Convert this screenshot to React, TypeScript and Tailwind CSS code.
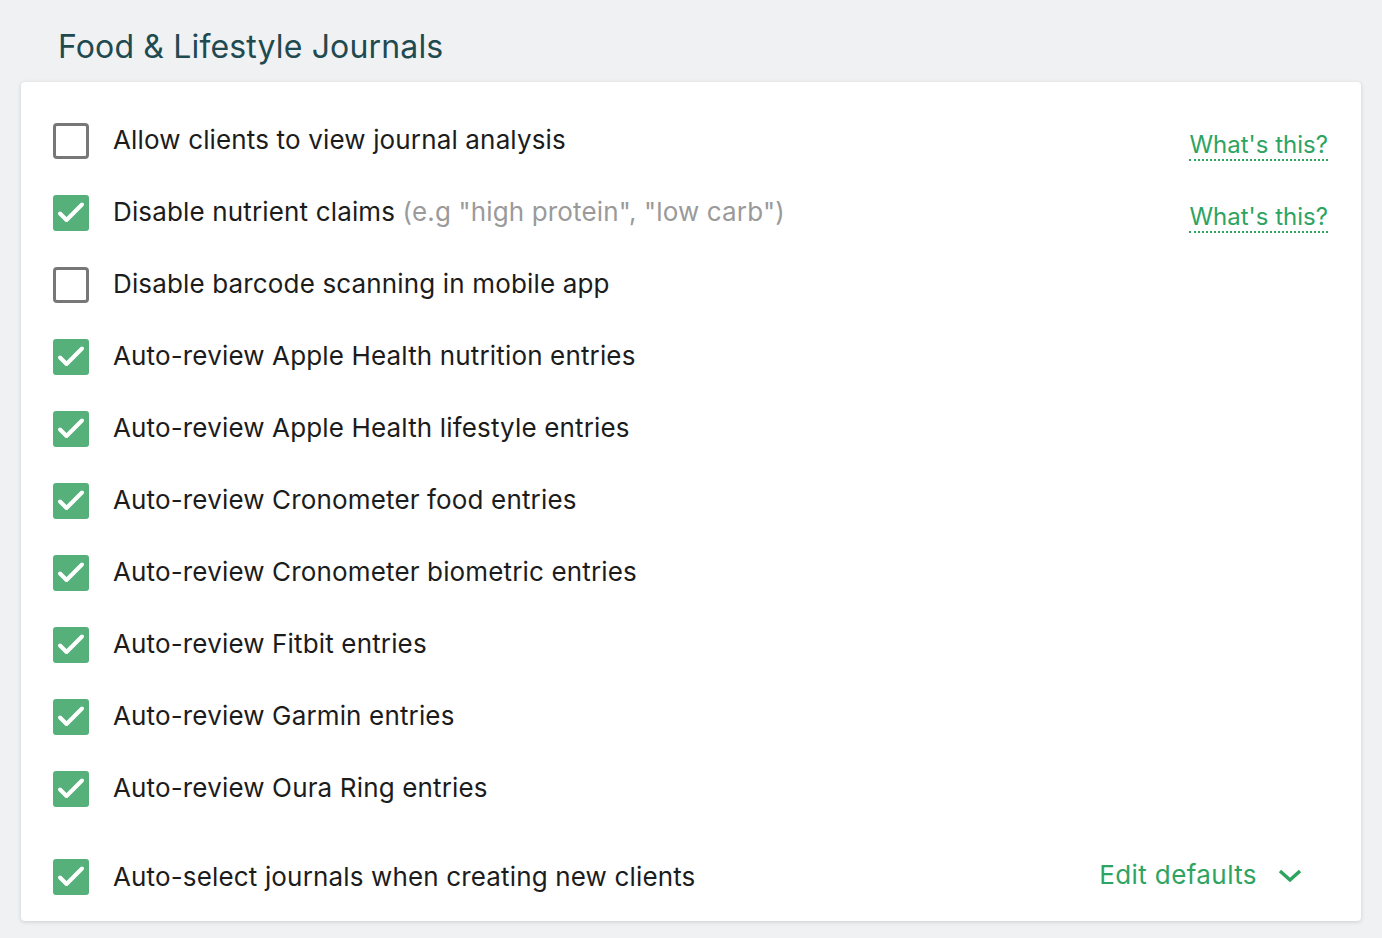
import React from "react";

const rows: { label: string; hint?: string; checked: boolean; help?: boolean }[] = [
  { label: "Allow clients to view journal analysis", checked: false, help: true },
  { label: "Disable nutrient claims", hint: '(e.g "high protein", "low carb")', checked: true, help: true },
  { label: "Disable barcode scanning in mobile app", checked: false },
  { label: "Auto-review Apple Health nutrition entries", checked: true },
  { label: "Auto-review Apple Health lifestyle entries", checked: true },
  { label: "Auto-review Cronometer food entries", checked: true },
  { label: "Auto-review Cronometer biometric entries", checked: true },
  { label: "Auto-review Fitbit entries", checked: true },
  { label: "Auto-review Garmin entries", checked: true },
  { label: "Auto-review Oura Ring entries", checked: true },
];

function Box({ checked }: { checked: boolean }) {
  if (checked) {
    return (
      <div className="w-[36px] h-[36px] rounded-[3px] bg-[#55b07a] shrink-0">
        <svg width="36" height="36" viewBox="0 0 36 36" fill="none">
          <path d="M7 18.5 L13.5 25 L29 9.5" stroke="white" strokeWidth="4" strokeLinecap="round" strokeLinejoin="round" />
        </svg>
      </div>
    );
  }
  return <div className="w-[36px] h-[36px] rounded-[4px] border-[3px] border-[#777777] bg-white shrink-0" />;
}

function Help() {
  return (
    <span className="text-[24px] text-[#2ea462] border-b-2 border-dotted border-[#2ea462] leading-[28px] mt-[9px]">
      What's this?
    </span>
  );
}

export default function App() {
  return (
    <div className="min-h-[938px] bg-[#f0f1f3] font-['Inter','Liberation_Sans',sans-serif]">
      <div className="pt-[27px] pl-[58px] h-[82px]">
        <h1 className="text-[32px] leading-[40px] text-[#1f4a50] font-normal tracking-[0.15px]">Food &amp; Lifestyle Journals</h1>
      </div>
      <div className="mx-[21px] bg-white rounded-[4px] shadow-[0_1px_4px_rgba(0,0,0,0.15)] pt-[23px] pb-[8px] pl-[32px] pr-[33px] h-[839px]">
        {rows.map((r, i) => (
          <div key={i} className="h-[72px] flex items-center">
            <Box checked={r.checked} />
            <div className="ml-[24px] text-[26px] text-[#1c1c1c] leading-[32px] flex-1 mb-[2px] tracking-[0.15px]">
              {r.label}
              {r.hint && <span className="text-[#9a9a9a]"> {r.hint}</span>}
            </div>
            {r.help && <Help />}
          </div>
        ))}
        <div className="h-[72px] mt-[16px] flex items-center">
          <Box checked={true} />
          <div className="ml-[24px] text-[26px] text-[#1c1c1c] leading-[32px] flex-1 mb-[1px] tracking-[0.15px]">
            Auto-select journals when creating new clients
          </div>
          <div className="flex items-center mr-[25px] mb-[4px]">
            <span className="text-[26px] text-[#2ea462] leading-[32px] tracking-[0.4px]">Edit defaults</span>
            <svg className="ml-[20px]" width="26" height="18" viewBox="0 0 26 18" fill="none">
              <path d="M3 5 L13 14 L23 5" stroke="#2ea462" strokeWidth="3.5" />
            </svg>
          </div>
        </div>
      </div>
    </div>
  );
}
